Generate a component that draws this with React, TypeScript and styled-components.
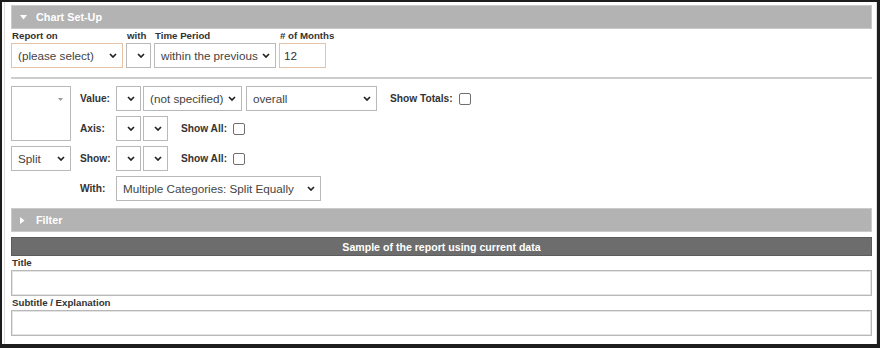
import styled, { createGlobalStyle } from 'styled-components';

const GlobalStyle = createGlobalStyle`
  html, body {
    margin: 0;
    padding: 0;
    background: #fff;
  }
  body {
    font-family: "Liberation Sans", Arial, sans-serif;
  }
`;

function Chevron() {
  return (
    <svg width="8" height="5" viewBox="0 0 8 5">
      <path d="M1 1 L4 4 L7 1" fill="none" stroke="#222" strokeWidth="1.7" />
    </svg>
  );
}

function Select({ w, text, accent, ml }: { w: number; text?: string; accent?: boolean; ml?: number }) {
  return (
    <SelectBox $w={w} $accent={accent} $ml={ml}>
      <span>{text}</span>
      <Chevron />
    </SelectBox>
  );
}

function App() {
  return (
    <>
      <GlobalStyle />
      <Frame>
        <Panel>
          <SectionBar>
            <BarIcon>
              <svg width="7" height="5" viewBox="0 0 7 5">
                <path d="M0 0 H7 L3.5 4.5 Z" fill="#fff" />
              </svg>
            </BarIcon>
            Chart Set-Up
          </SectionBar>

          <SetupRow>
            <Field $w={112}>
              <FieldLabel>Report on</FieldLabel>
              <Select w={112} text="(please select)" accent />
            </Field>
            <Field $w={25}>
              <FieldLabel>with</FieldLabel>
              <Select w={25} />
            </Field>
            <Field $w={122}>
              <FieldLabel>Time Period</FieldLabel>
              <Select w={122} text="within the previous" />
            </Field>
            <Field $w={47}>
              <FieldLabel># of Months</FieldLabel>
              <TextBox $accent>12</TextBox>
            </Field>
          </SetupRow>

          <Divider />

          <ChartGrid>
            <ListBox>
              <svg width="5" height="3" viewBox="0 0 5 3">
                <path d="M0 0 H5 L2.5 3 Z" fill="#9a9a9a" />
              </svg>
            </ListBox>
            <RowLabel>Value:</RowLabel>
            <Controls>
              <Select w={25} />
              <Select w={99} text="(not specified)" />
              <Select w={131} text="overall" ml={2} />
              <InlineLabel>Show Totals:</InlineLabel>
              <Check />
            </Controls>

            <RowLabel>Axis:</RowLabel>
            <Controls>
              <Select w={25} />
              <Select w={25} />
              <InlineLabel>Show All:</InlineLabel>
              <Check />
            </Controls>

            <Select w={60} text="Split" />
            <RowLabel>Show:</RowLabel>
            <Controls>
              <Select w={25} />
              <Select w={25} />
              <InlineLabel>Show All:</InlineLabel>
              <Check />
            </Controls>

            <span />
            <RowLabel>With:</RowLabel>
            <Controls>
              <Select w={205} text="Multiple Categories: Split Equally" />
            </Controls>
          </ChartGrid>

          <SectionBar $mt={7}>
            <BarIcon>
              <svg width="5" height="7" viewBox="0 0 5 7">
                <path d="M0 0 V7 L4.5 3.5 Z" fill="#fff" />
              </svg>
            </BarIcon>
            Filter
          </SectionBar>

          <SampleBar>Sample of the report using current data</SampleBar>

          <FieldLabel>Title</FieldLabel>
          <WideInput />
          <FieldLabel>Subtitle / Explanation</FieldLabel>
          <WideInput />
        </Panel>
      </Frame>
    </>
  );
}

export default App;

const Frame = styled.div`
  width: 880px;
  height: 348px;
  box-sizing: border-box;
  border-style: solid;
  border-color: #1d1d1d;
  border-width: 2px 3px 4px 2px;
  background: #fff;
  display: flex;
`;

const Panel = styled.div`
  flex: 1;
  margin-left: 2px;
  border-left: 1px solid #dedede;
  border-right: 1px solid #dedede;
  padding: 3px 4px 0 6px;
  display: flex;
  flex-direction: column;
`;

const SectionBar = styled.div<{ $mt?: number }>`
  height: 24px;
  box-sizing: border-box;
  margin-top: ${(p) => p.$mt ?? 0}px;
  background: #b3b3b3;
  border: 1px solid #cbcbcb;
  display: flex;
  align-items: center;
  padding-left: 8px;
  color: #fff;
  font-size: 10.8px;
  font-weight: bold;
`;

const BarIcon = styled.span`
  width: 16px;
  display: flex;
  align-items: center;
`;

const SetupRow = styled.div`
  display: flex;
  gap: 3px;
`;

const Field = styled.div<{ $w: number }>`
  width: ${(p) => p.$w}px;
  display: flex;
  flex-direction: column;
`;

const FieldLabel = styled.div`
  height: 14px;
  line-height: 14px;
  font-size: 9.7px;
  font-weight: bold;
  color: #333;
  white-space: nowrap;
  padding-left: 1px;
`;

const SelectBox = styled.div<{ $w: number; $accent?: boolean; $ml?: number }>`
  width: ${(p) => p.$w}px;
  height: 25px;
  flex: none;
  box-sizing: border-box;
  margin-left: ${(p) => p.$ml ?? 0}px;
  border: 1px solid ${(p) => (p.$accent ? '#e6c3a6' : '#b9b9b9')};
  background: #fff;
  display: flex;
  align-items: center;
  justify-content: space-between;
  padding: 0 5px 0 6px;
  font-size: 11.7px;
  color: #444;
  white-space: nowrap;
  overflow: hidden;
`;

const TextBox = styled.div<{ $accent?: boolean }>`
  height: 25px;
  box-sizing: border-box;
  border: 1px solid ${(p) => (p.$accent ? '#e6c3a6' : '#b9b9b9')};
  display: flex;
  align-items: center;
  padding-left: 4px;
  font-size: 11.7px;
  color: #333;
`;

const Divider = styled.div`
  height: 0;
  border-top: 2px solid #cdcdcd;
  margin: 9px 0 7px;
`;

const ChartGrid = styled.div`
  display: grid;
  grid-template-columns: 60px 45px 1fr;
  grid-auto-rows: 25px;
  row-gap: 5px;
`;

const ListBox = styled.div`
  grid-row: span 2;
  box-sizing: border-box;
  border: 1px solid #b9b9b9;
  display: flex;
  justify-content: flex-end;
  align-items: flex-start;
  padding: 11px 7px 0 0;
`;

const RowLabel = styled.div`
  display: flex;
  align-items: center;
  padding-left: 9px;
  font-size: 10.2px;
  font-weight: bold;
  color: #333;
`;

const Controls = styled.div`
  display: flex;
  align-items: center;
  gap: 2px;
`;

const InlineLabel = styled.span`
  margin-left: 11px;
  font-size: 10.2px;
  font-weight: bold;
  color: #333;
  white-space: nowrap;
`;

const Check = styled.span`
  width: 12px;
  height: 12px;
  margin-left: 4px;
  box-sizing: border-box;
  border: 1px solid #6f6f6f;
  border-radius: 2px;
  background: #fff;
`;

const SampleBar = styled.div`
  height: 19px;
  margin-top: 5px;
  box-sizing: border-box;
  background: #6d6d6d;
  border: 1px solid #5c5c5c;
  display: flex;
  align-items: center;
  justify-content: center;
  color: #fff;
  font-size: 10.6px;
  font-weight: bold;
`;

const WideInput = styled.div`
  height: 26px;
  box-sizing: border-box;
  border: 1px solid #b8b8b8;
  box-shadow: inset 0 0 0 1px #e4e4e4;
  background: #fff;
`;
